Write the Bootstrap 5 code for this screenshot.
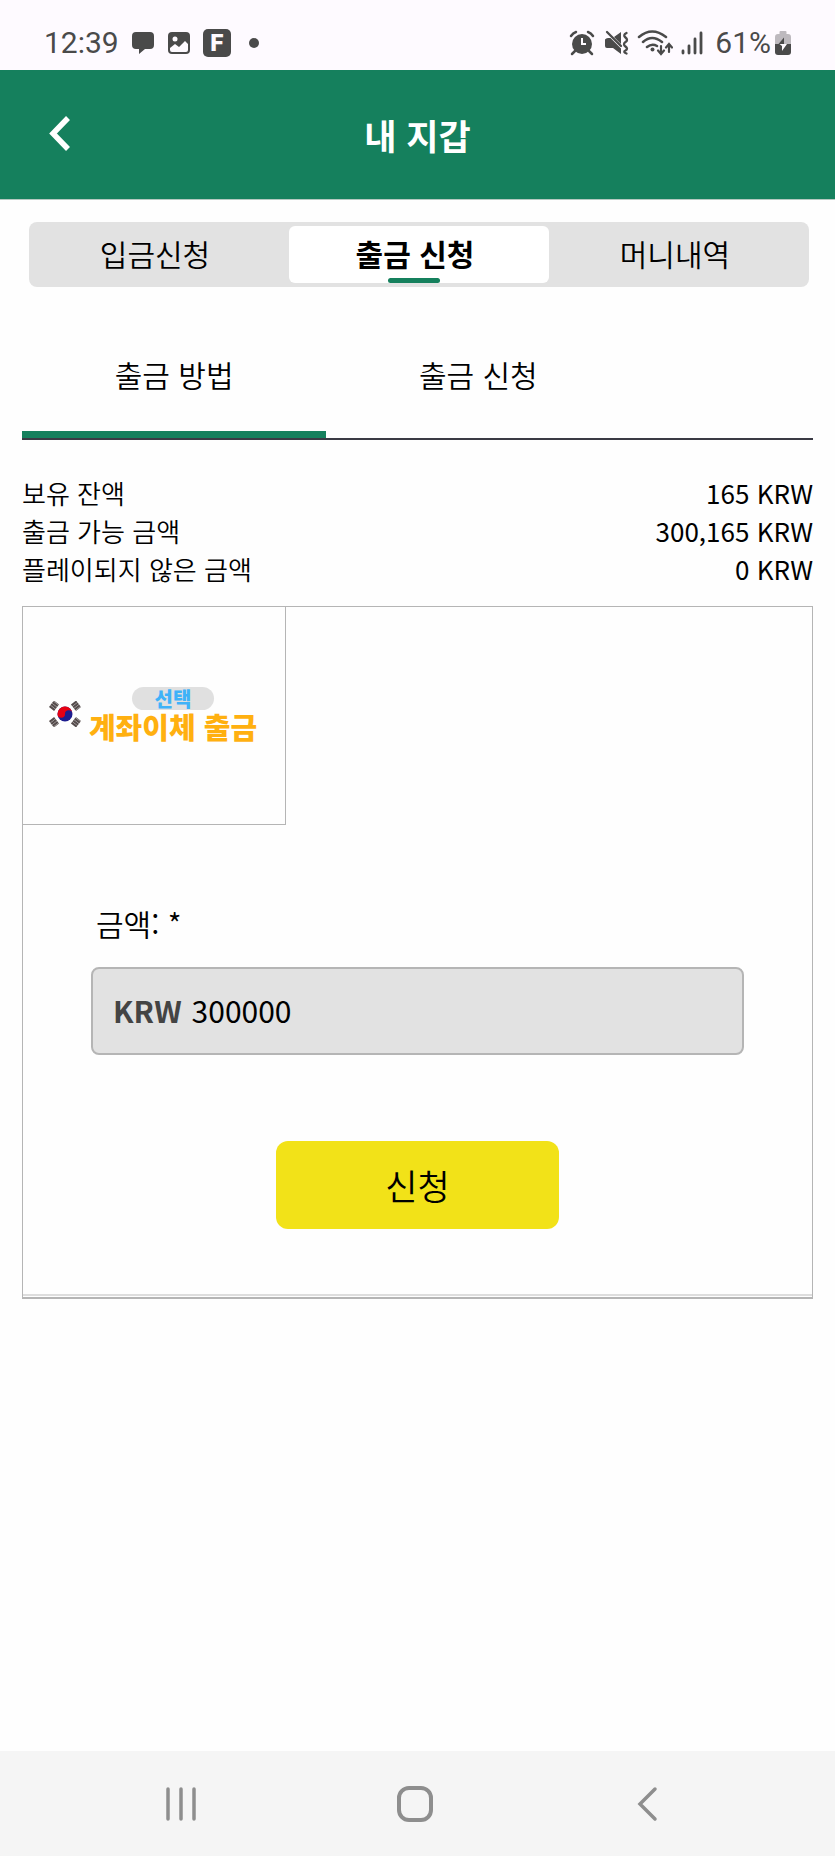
<!DOCTYPE html>
<html lang="ko">
<head>
<meta charset="utf-8">
<meta name="viewport" content="width=device-width, initial-scale=1">
<title>내 지갑</title>
<link href="https://cdn.jsdelivr.net/npm/bootstrap@5.3.0/dist/css/bootstrap.min.css" rel="stylesheet">
<style>
  :root { --brand: #15805d; --panel: #e2e2e2; --line: #b5b5b5; }
  body { font-family: "Noto Sans CJK KR", sans-serif; font-size: 30px; line-height: 40px; font-weight: 350; color: #000; background: #fefefe; }
  a { color: inherit; text-decoration: none; }
  svg { display: block; flex: none; }

  .status-bar { height: 70px; padding: 16px 44px 0; background: #fefaff; color: #4a4a4a; font-family: Roboto, sans-serif; font-weight: 400; }
  .app-tile { width: 28px; height: 28px; border-radius: 5px; background: #4a4a4a; color: #fefaff; font-size: 24px; line-height: 28px; font-weight: 900; }

  .app-header { height: 130px; padding-bottom: 2px; background: var(--brand); color: #fff; border-bottom: 1px solid #b5c9c1; }
  .app-header h1 { padding-top: 2px; font-size: 35px; line-height: 48px; font-weight: 700; }
  .back-button { left: 48px; }

  .segments { margin: 22px 26px 0 29px; padding: 4px 0; background: var(--panel); border-radius: 8px; }
  .segments a { height: 57px; padding: 0 8px 3px 0; border-radius: 6px; }
  .segments a.active { background: #fff; font-weight: 700; }
  .segments a.active::after { content: ""; position: absolute; bottom: 0; left: 38%; right: 42%; height: 5px; border-radius: 3px; background: var(--brand); }

  .page-body { padding: 0 22px; }
  .steps { margin-top: 53px; border-bottom: 2px solid #3a3a44; }
  .steps a { width: calc(100% * 5 / 13); height: 98px; padding-top: 14px; border-bottom: 7px solid transparent; }
  .steps a.active { border-color: var(--brand); }

  .balances { margin: 34px 0 18px; font-size: 26px; line-height: 38px; }
  .balances dt { font-weight: 350; }
  .balances dd { font-weight: 400; }

  .panel-box { border: 1px solid var(--line); border-bottom-width: 2px; }
  .panel-inner { border-bottom: 2px solid #ddd; margin-bottom: 1px; }
  .method { height: 218px; border: solid var(--line); border-width: 0 1px 1px 0; background: none; padding: 0 25px 3px 23px; gap: 8px; font-weight: 900; }
  .method-tag { width: 82px; border-radius: 12px; background: #e0e0e0; color: #3fb2f8; font-size: 20px; line-height: 23px; }
  .method-name { color: #ffb010; font-size: 29px; line-height: 32px; white-space: nowrap; }

  .amount-form { padding: 78px 68px 65px; }
  .amount-form label { padding-left: 5px; margin-bottom: 24px; }
  .amount-box { height: 88px; padding: 0 20px 3px; gap: 10px; background: var(--panel); border: 2px solid var(--line); border-radius: 8px; }
  .amount-box span { color: #444; font-weight: 700; }
  .amount-box input { min-width: 0; background: none; border: 0; padding: 0; font-weight: 400; outline-offset: 8px; }
  .submit-button { width: 283px; height: 88px; margin-top: 86px; border: 0; border-radius: 12px; background: #f2e218; font-size: 35px; font-weight: 350; }

  .system-nav { height: 105px; background: #f5f5f5; padding: 0 166px 0 160px; }
  .system-nav button { width: 42px; height: 42px; }
</style>
</head>
<body>
<div class="d-flex flex-column min-vh-100">

  <div class="status-bar d-flex justify-content-between align-items-center">
    <div class="d-flex align-items-center gap-2">
      <span class="me-1">12:39</span>
      <svg class="me-1" width="24" height="24" viewBox="0 0 24 24" fill="#4a4a4a"><path d="M5 1h14q4 0 4 4v9q0 4-4 4h-5l-6 5v-5H5q-4 0-4-4V5q0-4 4-4z"/></svg>
      <svg class="me-1" width="24" height="24" viewBox="0 0 24 24"><rect x="1" y="1" width="22" height="22" rx="4" fill="#4a4a4a"/><circle cx="8" cy="8" r="2.5" fill="#fefaff"/><path d="M3 17l5-4 4 3 6-6 3 3v6q0 2-2 2H5q-2 0-2-2z" fill="#fefaff"/></svg>
      <span class="app-tile text-center">F</span>
      <svg class="ms-2" width="14" height="24" viewBox="0 0 14 24"><circle cx="7" cy="12" r="5" fill="#4a4a4a"/></svg>
    </div>
    <div class="d-flex align-items-center gap-2">
      <svg width="26" height="26" viewBox="0 0 26 26" fill="none" stroke="#4a4a4a" stroke-width="2.5" stroke-linecap="round"><circle cx="13" cy="14" r="10" fill="#4a4a4a" stroke="none"/><path d="M2 6q2-3 5-4M24 6q-2-3-5-4M6 21l-3 3M20 21l3 3"/><path d="M13 8v6h4" stroke="#fefaff" stroke-width="2" stroke-linecap="butt"/></svg>
      <svg width="26" height="26" viewBox="0 0 26 26"><path d="M2 9.500q1-1.500 3-1.500h2.500L18 18.500V24l-8-6H4q-2 0-2-2zM11 7l7-5v12z" fill="#4a4a4a"/><path d="M4 2l14 14M23.500 3q-4 2-1 4.500t0 4.500 0 4.500 0 4 1 3" fill="none" stroke="#4a4a4a" stroke-width="2.300" stroke-linecap="round"/></svg>
      <svg width="36" height="28" viewBox="0 0 36 28" fill="none" stroke="#4a4a4a" stroke-width="2.500" stroke-linecap="round"><path d="M2 8q13-11 27 0M6 13q9-8 19 0M10 18q5-4 10-1"/><circle cx="15.500" cy="20.500" r="2" fill="#4a4a4a" stroke="none"/><path d="M24 17v7m-3-2.500L24 25l3-3.500M32 23v-7m-3 2.500l3-3.500 3 3.500" stroke-width="2.200"/></svg>
      <svg class="me-1" width="22" height="26" viewBox="0 0 22 26" fill="none" stroke="#4a4a4a" stroke-width="2.800" stroke-linecap="round"><path d="M2 21v2M8 16v7M14 9v14M20 3v20"/></svg>
      <div class="d-flex align-items-center gap-1">
        <span>61%</span>
        <svg width="16" height="26" viewBox="0 0 16 26"><path d="M4.500 4V2q0-1 1-1h5q1 0 1 1v2H13q3 0 3 3v7H0V7q0-3 3-3z" fill="#bdb9be"/><path d="M0 14h16v8q0 3-3 3H3q-3 0-3-3z" fill="#4a4a4a"/><path d="M9 7.500v6.500H3.500z" fill="#4a4a4a"/><path d="M4.500 14H12l-5 7v-5z" fill="#fefaff"/></svg>
      </div>
    </div>
  </div>

  <header class="app-header d-flex align-items-center justify-content-center position-relative">
    <button class="back-button btn p-0 border-0 position-absolute" type="button" aria-label="뒤로">
      <svg width="24" height="40" viewBox="0 0 24 40" fill="none" stroke="#fff" stroke-width="5.500"><path d="M20 4L5 19.500 20 35"/></svg>
    </button>
    <h1 class="m-0">내 지갑</h1>
  </header>

  <nav class="segments d-flex">
    <a class="col-4 d-flex align-items-center justify-content-center" href="#deposit">입금신청</a>
    <a class="col-4 d-flex align-items-center justify-content-center position-relative active" href="#withdraw" aria-current="page">출금 신청</a>
    <a class="col-4 d-flex align-items-center justify-content-center" href="#history">머니내역</a>
  </nav>

  <main class="page-body">
    <nav class="steps d-flex text-center">
      <a class="active" href="#method">출금 방법</a>
      <a href="#request">출금 신청</a>
    </nav>

    <dl class="balances">
      <div class="d-flex justify-content-between"><dt>보유 잔액</dt><dd class="m-0">165 KRW</dd></div>
      <div class="d-flex justify-content-between"><dt>출금 가능 금액</dt><dd class="m-0">300,165 KRW</dd></div>
      <div class="d-flex justify-content-between"><dt>플레이되지 않은 금액</dt><dd class="m-0">0 KRW</dd></div>
    </dl>

    <section class="panel-box">
      <div class="panel-inner">
        <button class="method col-4 d-flex align-items-center justify-content-center" type="button">
          <svg width="32" height="26" viewBox="0 0 32 26"><g stroke="#554c4c" stroke-width="6.500" stroke-dasharray="2.200 .3"><path d="M2.500 8L7.500 1.500M24.500 1.500L29.500 8M2.500 18l5 6.500M24.500 24.500L29.500 18"/></g><circle cx="16" cy="13" r="7.500" fill="#1d1d8f"/><path d="M8.500 13A3.750 3.750 0 0 0 16 13a3.750 3.750 0 0 1 7.500 0A7.500 7.500 0 0 0 8.500 13z" fill="#e60012"/></svg>
          <span class="d-flex flex-column align-items-center">
            <span class="method-tag">선택</span>
            <span class="method-name">계좌이체 출금</span>
          </span>
        </button>

        <form class="amount-form">
          <label class="d-block" for="amount">금액: *</label>
          <div class="amount-box d-flex align-items-center">
            <span>KRW</span>
            <input class="flex-grow-1" id="amount" type="text" inputmode="numeric" value="300000" required>
          </div>
          <button class="submit-button d-block mx-auto" type="submit">신청</button>
        </form>
      </div>
    </section>
  </main>

  <nav class="system-nav d-flex align-items-center justify-content-between mt-auto">
    <button class="btn border-0 p-0" type="button" aria-label="최근 앱"><svg width="42" height="42" viewBox="0 0 42 42" stroke="#8e8e8e" stroke-width="3.500" stroke-linecap="round"><path d="M8 6v30M21 6v30M34 6v30"/></svg></button>
    <button class="btn border-0 p-0" type="button" aria-label="홈"><svg width="42" height="42" viewBox="0 0 42 42"><rect x="5" y="5" width="32" height="32" rx="10" fill="none" stroke="#8e8e8e" stroke-width="4"/></svg></button>
    <button class="btn border-0 p-0" type="button" aria-label="이전"><svg width="42" height="42" viewBox="0 0 42 42" fill="none" stroke="#8e8e8e" stroke-width="3.500" stroke-linecap="round"><path d="M28 6L13 21l15 15"/></svg></button>
  </nav>
</div>
<script src="https://cdn.jsdelivr.net/npm/bootstrap@5.3.0/dist/js/bootstrap.bundle.min.js"></script>
</body>
</html>
